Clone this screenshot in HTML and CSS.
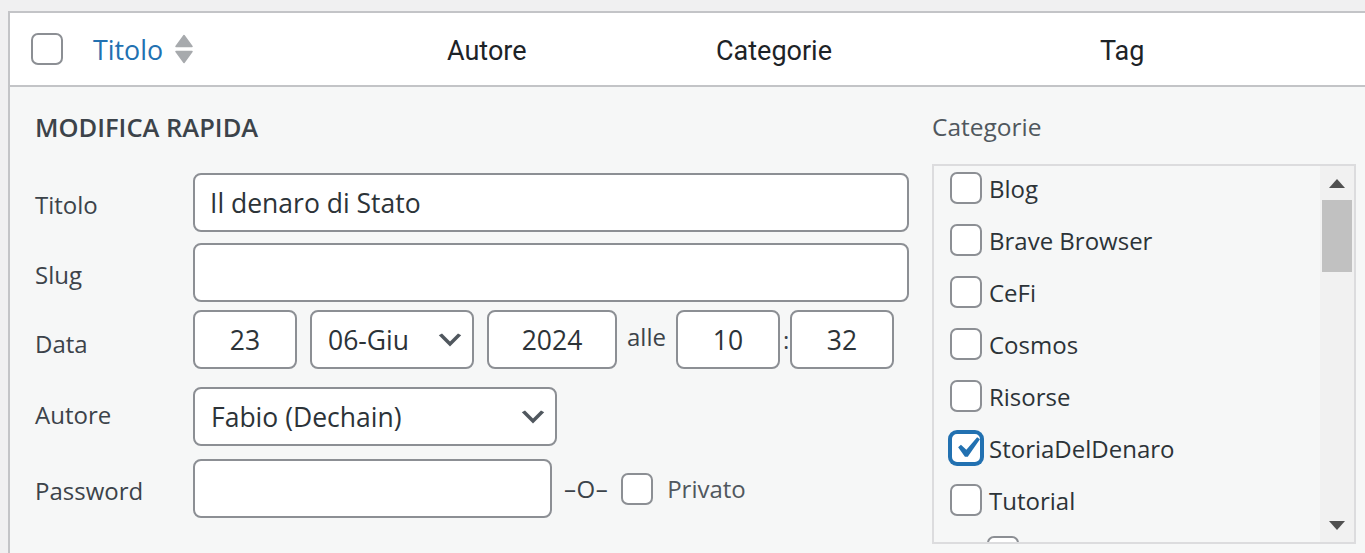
FILE: index.html
```html
<!DOCTYPE html>
<html lang="it">
<head>
<meta charset="utf-8">
<title>Modifica rapida</title>
<link rel="stylesheet" href="styles.css">
</head>
<body>
<div class="page">
  <div class="list-table">
    <div class="thead">
      <div class="th th-cb"><span class="checkbox"></span></div>
      <div class="th th-title">
        <a class="sort-link" href="#">Titolo</a>
        <svg class="sort-ind" width="18" height="32" viewBox="0 0 18 32">
          <path d="M9 1.5 L17 12.5 H1 Z" fill="#a7aaad" stroke="#a7aaad" stroke-width="1.5" stroke-linejoin="round"/>
          <path d="M1 17.5 H17 L9 28.5 Z" fill="#a7aaad" stroke="#a7aaad" stroke-width="1.5" stroke-linejoin="round"/>
        </svg>
      </div>
      <div class="th th-text th-author">Autore</div>
      <div class="th th-text th-cats">Categorie</div>
      <div class="th th-text th-tags">Tag</div>
    </div>

    <div class="quick-edit">
      <div class="qe-left">
        <div class="legend">MODIFICA RAPIDA</div>

        <div class="field">
          <span class="field-label">Titolo</span>
          <input class="text-input w-title" type="text" value="Il denaro di Stato">
        </div>

        <div class="field field-slug">
          <span class="field-label">Slug</span>
          <input class="text-input w-title" type="text" value="">
        </div>

        <div class="field field-date">
          <span class="field-label label-date">Data</span>
          <div class="date-group">
            <input class="text-input centered w-day" type="text" value="23">
            <div class="select w-month"><span>06-Giu</span>
              <svg class="chevron" width="32" height="32" viewBox="0 0 20 20"><path d="M5 6l5 5 5-5 2 1-7 7-7-7 2-1z" fill="#50575e"/></svg>
            </div>
            <input class="text-input centered w-year" type="text" value="2024">
            <span class="at-text">alle</span>
            <input class="text-input centered w-hour" type="text" value="10">
            <span class="colon">:</span>
            <input class="text-input centered w-min" type="text" value="32">
          </div>
        </div>

        <div class="field field-author">
          <span class="field-label label-author">Autore</span>
          <div class="select w-author"><span>Fabio (Dechain)</span>
            <svg class="chevron" width="32" height="32" viewBox="0 0 20 20"><path d="M5 6l5 5 5-5 2 1-7 7-7-7 2-1z" fill="#50575e"/></svg>
          </div>
        </div>

        <div class="field field-pass">
          <span class="field-label">Password</span>
          <input class="text-input w-pass" type="text" value="">
          <span class="sep">–O–</span>
          <span class="checkbox"></span>
          <span class="private-label">Privato</span>
        </div>
      </div>

      <div class="qe-right">
        <div class="cat-title">Categorie</div>
        <div class="cat-box">
          <ul class="cat-list">
            <li class="cat-item"><span class="checkbox"></span><span class="cat-name">Blog</span></li>
            <li class="cat-item"><span class="checkbox"></span><span class="cat-name">Brave Browser</span></li>
            <li class="cat-item"><span class="checkbox"></span><span class="cat-name">CeFi</span></li>
            <li class="cat-item"><span class="checkbox"></span><span class="cat-name">Cosmos</span></li>
            <li class="cat-item"><span class="checkbox"></span><span class="cat-name">Risorse</span></li>
            <li class="cat-item"><span class="checkbox checked">
              <svg class="check" width="42" height="42" viewBox="0 0 20 20"><path d="M14.83 4.89l1.34.94-5.81 8.38H9.02L5.78 9.67l1.34-1.25 2.57 2.4z" fill="#2271b1"/></svg>
            </span><span class="cat-name">StoriaDelDenaro</span></li>
            <li class="cat-item"><span class="checkbox"></span><span class="cat-name">Tutorial</span></li>
            <li class="cat-item child"><span class="checkbox"></span></li>
          </ul>
          <div class="scrollbar">
            <div class="sb-btn"><span class="tri-up"></span></div>
            <div class="sb-thumb"></div>
            <div class="sb-space"></div>
            <div class="sb-btn"><span class="tri-down"></span></div>
          </div>
        </div>
      </div>
    </div>
  </div>
</div>
</body>
</html>
```

FILE: styles.css
```css
* { box-sizing: border-box; }

html, body {
  margin: 0;
  padding: 0;
  height: 100%;
  overflow: hidden;
}

body {
  background: #f0f0f1;
  font-family: "Open Sans", "Noto Sans", sans-serif;
  color: #3c434a;
}

.page {
  padding: 11px 0 0 8px;
  height: 100%;
}

.list-table {
  width: 1400px;
  height: 100%;
  border-top: 2px solid #c3c4c7;
  border-left: 2px solid #c3c4c7;
  display: flex;
  flex-direction: column;
}

/* header */
.thead {
  height: 74px;
  background: #fff;
  border-bottom: 2px solid #c3c4c7;
  display: flex;
  align-items: center;
  flex-shrink: 0;
}

.th {
  display: flex;
  align-items: center;
  font-family: Roboto, "Open Sans", sans-serif;
  font-size: 27px;
  color: #1d2327;
}

.th-text { padding-top: 4px; }

.th-cb { width: 83px; padding-left: 21px; }
.th-title { width: 354px; gap: 12px; padding-top: 1px; }
.th-author { width: 269px; }
.th-cats { width: 384px; }

.sort-link {
  font-family: "Open Sans", "Noto Sans", sans-serif;
  font-size: 26.8px;
  color: #2271b1;
  text-decoration: none;
}

.sort-ind { margin-top: 0; }

/* checkbox */
.checkbox {
  width: 32px;
  height: 32px;
  flex-shrink: 0;
  border: 2px solid #8c8f94;
  border-radius: 7px;
  background: #fff;
  display: flex;
  align-items: center;
  justify-content: center;
}

.checkbox.checked {
  border-color: #2271b1;
  box-shadow: 0 0 0 2px #2271b1;
}

.check { flex-shrink: 0; margin: 0 0 0 2px; }

/* quick edit */
.quick-edit {
  flex: 1;
  background: #f6f7f7;
  display: flex;
  padding: 23px 0 0 25px;
}

.qe-left {
  width: 874px;
  display: flex;
  flex-direction: column;
}

.legend {
  font-size: 25.5px;
  line-height: 34px;
  font-weight: 600;
  color: #3c434a;
  margin-bottom: 29px;
}

.field {
  display: flex;
  align-items: center;
}

.field-slug { margin-top: 11px; }
.field-date { margin-top: 8px; }
.field-author { margin-top: 18px; }
.field-pass { margin-top: 13px; }

.field-label {
  width: 158px;
  flex-shrink: 0;
  font-size: 24px;
  color: #3c434a;
  padding-top: 3px;
}

.label-date { padding-top: 7px; }
.label-author { padding-top: 0; margin-top: -5px; }

.text-input, .select {
  height: 59px;
  border: 2px solid #8c8f94;
  border-radius: 8px;
  background: #fff;
  font-family: "Open Sans", "Noto Sans", sans-serif;
  font-size: 26.5px;
  color: #2c3338;
  padding: 0 15px;
  outline: none;
}

.text-input.centered { text-align: center; padding: 0 4px; }

.w-title { width: 716px; }
.w-day { width: 104px; }
.w-month { width: 164px; }
.w-year { width: 130px; }
.w-hour { width: 104px; }
.w-min { width: 104px; }
.w-author { width: 364px; }
.w-pass { width: 359px; }

.date-group {
  display: flex;
  align-items: center;
  gap: 13px;
}

.select {
  display: flex;
  align-items: center;
  justify-content: space-between;
  padding: 0 6px 0 16px;
}

.chevron { flex-shrink: 0; }

.at-text {
  font-size: 24px;
  color: #3c434a;
  align-self: flex-start;
  margin: 10px -3px 0 -3px;
}

.colon {
  font-size: 24px;
  color: #3c434a;
  margin: 0 -10px;
  width: 4px;
  text-align: center;
}

.sep {
  font-size: 24px;
  color: #3c434a;
  margin-left: 12px;
  letter-spacing: 0.5px;
}

.field-pass .checkbox { margin-left: 13px; }

.private-label {
  font-size: 24px;
  color: #50575e;
  margin-left: 14px;
}

/* categories */
.qe-right {
  margin-left: 23px;
  display: flex;
  flex-direction: column;
}

.cat-title {
  font-size: 24.5px;
  line-height: 34px;
  color: #50575e;
  margin-bottom: 20px;
}

.cat-box {
  width: 424px;
  height: 380px;
  border: 2px solid #dcdcde;
  display: flex;
  overflow: hidden;
}

.cat-list {
  flex: 1;
  list-style: none;
  margin: -4px 0 0 0;
  padding: 0 0 0 16px;
  overflow: hidden;
}

.cat-item {
  height: 52px;
  display: flex;
  align-items: center;
  gap: 7px;
}

.cat-item.child { padding-left: 37px; }

.cat-name {
  font-size: 24px;
  color: #2c3338;
}

.scrollbar {
  width: 34px;
  background: #f1f1f1;
  display: flex;
  flex-direction: column;
  align-items: center;
  flex-shrink: 0;
}

.sb-btn {
  width: 34px;
  height: 34px;
  display: flex;
  align-items: center;
  justify-content: center;
}

.sb-thumb {
  width: 30px;
  height: 72px;
  background: #c1c1c1;
}

.sb-space { flex: 1; }

.tri-up, .tri-down {
  width: 0;
  height: 0;
  border-left: 8px solid transparent;
  border-right: 8px solid transparent;
}

.tri-up { border-bottom: 9px solid #505050; }
.tri-down { border-top: 9px solid #505050; }
```
